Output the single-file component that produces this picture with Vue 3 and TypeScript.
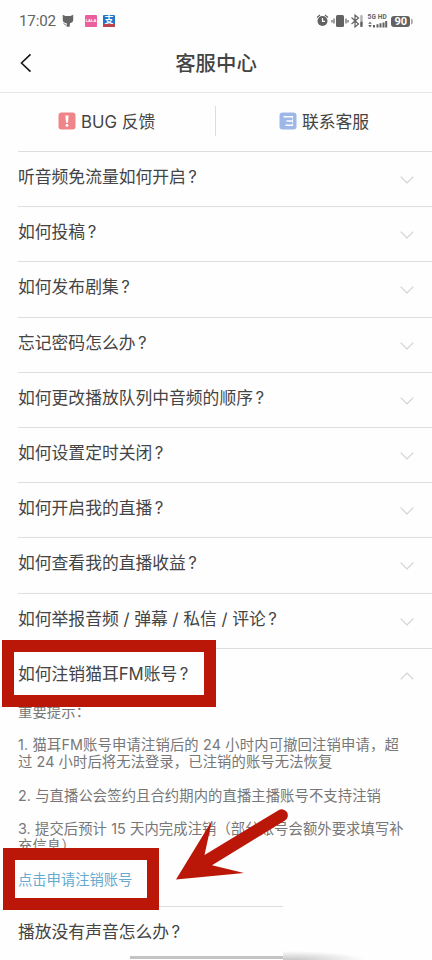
<script setup lang="ts">
interface Question {
  text: string
  open?: boolean
}

const questions: Question[] = [
  { text: '听音频免流量如何开启' },
  { text: '如何投稿' },
  { text: '如何发布剧集' },
  { text: '忘记密码怎么办' },
  { text: '如何更改播放队列中音频的顺序' },
  { text: '如何设置定时关闭' },
  { text: '如何开启我的直播' },
  { text: '如何查看我的直播收益' },
  { text: '如何举报音频 / 弹幕 / 私信 / 评论' },
  { text: '如何注销猫耳FM账号', open: true },
  { text: '播放没有声音怎么办' },
]
</script>

<template>
  <div class="screen">
    <header class="status">
      <span class="time">17:02</span>
      <svg class="cat" width="12" height="14" viewBox="0 0 12 14">
        <path d="M.7.8 3.400 2h5L11.200.8V6.500Q11 8.800 8 9.300L7.600 12.800H4.700V9.300Q1 8.800.8 6.500Z" fill="#666" />
        <path d="M1.500 9.500 4.500 11.500" fill="none" stroke="#888" />
      </svg>
      <span class="app pink">LALA</span>
      <span class="app pay"><b>支</b><i></i></span>
      <span class="spacer"></span>
      <svg class="system" width="97" height="18" viewBox="0 0 97 18">
        <g fill="#626262" stroke="none">
          <circle cx="6.500" cy="9" r="5" />
          <rect x="20" y="3" width="8" height="12" rx="1.500" />
          <rect x="44.200" y="3" width="2.500" height="7" rx="1" fill="#b4b4b4" />
          <rect x="44.200" y="9.500" width="2.500" height="5.500" rx="1" />
          <path d="m52.200 11.800 1.800-2 1.800 2zM52.200 13h3.600L54 15.500zM57 13h2v2.500h-2zM60.500 12.200h2v3.300h-2zM63.500 11.200h2v4.300h-2zM66.500 10.500h2v5h-2zM69.200 9h2v6.500h-2z" />
          <rect x="75" y="4" width="19" height="11" rx="3" />
          <path d="M95 6.500q2 .5 2 3t-2 3z" fill="#aaa" />
        </g>
        <g fill="none" stroke="#626262" stroke-width="1.200">
          <path d="m1 5.500 3-2.500M9 3 12 5.500M18 6.500v5M30 6.500v5M16 8v2.500M32 8v2.500M35.500 5.500l7 6.500-3.500 3V3l3.500 3-7 6" />
          <path d="M6.500 6v3.300H9" stroke="#fff" />
        </g>
        <text x="51.500" y="6.900" class="network">5G HD</text>
        <text x="78.500" y="13.400" class="battery">90</text>
      </svg>
    </header>

    <nav class="title-bar">
      <svg class="back" width="12" height="20" viewBox="0 0 12 20">
        <path d="M10.500 1.300 1.500 10l9 8.700" fill="none" stroke="#171717" stroke-width="1.600" />
      </svg>
      <h1>客服中心</h1>
    </nav>

    <section class="actions">
      <div class="action bug">
        <svg width="18" height="18" viewBox="0 0 18 18">
          <rect x=".5" y=".5" width="17" height="17" rx="3" fill="#ef8588" />
          <path d="M7.400 3.500h3.200L10 10.800H8z" fill="#fff" />
          <circle cx="9" cy="13.400" r="1.400" fill="#fff" />
        </svg>
        <span>BUG 反馈</span>
      </div>
      <div class="action contact">
        <svg width="18" height="18" viewBox="0 0 18 18">
          <rect x=".5" y=".5" width="17" height="17" rx="3" fill="#9db8e8" />
          <path d="M4.500 4.800H14M7.500 9H14M6.500 13.200H14" fill="none" stroke="#fff" stroke-width="1.500" />
          <path d="M13.600 4v10" fill="none" stroke="#fff" stroke-opacity=".6" />
        </svg>
        <span>联系客服</span>
      </div>
    </section>

    <main class="faq">
      <article v-for="question in questions" :key="question.text" class="item">
        <div class="question">
          <span class="label">{{ question.text }}<span class="mark">?</span></span>
          <svg class="chevron" :class="{ up: question.open }" width="14" height="8" viewBox="0 0 14 8">
            <path d="m.7.7 6.300 6.300L13.300.7" fill="none" stroke="#d2d2d2" stroke-width="1.200" />
          </svg>
          <span v-if="question.open" class="frame frame-question"></span>
        </div>
        <div v-if="question.open" class="answer">
          <p>重要提示：</p>
          <p><span class="wide">1. 猫耳FM账号申请注销后的 24 小时内可撤回注销申请，超</span><br />过 24 小时后将无法登录，已注销的账号无法恢复</p>
          <p>2. 与直播公会签约且合约期内的直播主播账号不支持注销</p>
          <p>3. 提交后预计 15 天内完成注销（部分账号会额外要求填写补<br />充信息）</p>
          <p class="link">点击申请注销账号</p>
          <span class="frame frame-link"></span>
          <svg class="arrow" width="116" height="76" viewBox="0 0 116 76">
            <path d="M2 74.500 38 15.500 30.500 50 104.500 5.200A6 6 0 0 1 111 15.500L38 60.300 70 68Z" fill="#bb1709" />
          </svg>
        </div>
      </article>
    </main>
    <div class="home-bar"></div>
    <div class="haze"></div>
  </div>
</template>

<style>
body {
  margin: 0;
  background: #fefefe;
}
</style>

<style scoped>
.screen {
  position: relative;
  width: 432px;
  height: 960px;
  overflow: hidden;
  background: #fefefe;
  color: #444;
  font-family: Inter, "Noto Sans CJK SC", sans-serif;
}
.status {
  display: flex;
  align-items: center;
  box-sizing: border-box;
  height: 34px;
  padding: 7px 19px 0 19px;
}
.time {
  width: 37px;
  font: 15.2px/20px Roboto, sans-serif;
  letter-spacing: -0.2px;
  color: #626262;
}
.cat {
  margin: 0 11px 0 6px;
}
.app {
  width: 12px;
  height: 12px;
  border-radius: 1px;
  color: #fff;
  text-align: center;
}
.pink {
  margin-right: 6px;
  background: #ec5f9f;
  font: bold 4px/12px "Liberation Sans", sans-serif;
}
.pay {
  display: flex;
  flex-direction: column;
  background: #2673c9;
}
.pay b {
  height: 9px;
  font-size: 9px;
  line-height: 9px;
}
.pay i {
  height: 3px;
  background: #bd444c;
}
.spacer {
  flex: 1;
}
.system {
  flex: none;
}
.network {
  font: bold 6.5px Roboto, sans-serif;
  letter-spacing: 0.15px;
  fill: #626262;
}
.battery {
  font: bold 11px Roboto, sans-serif;
  fill: #fff;
}
.title-bar {
  display: flex;
  align-items: center;
  box-sizing: border-box;
  height: 59px;
  padding: 0 20px 1px;
  border-bottom: 1px solid #e5e5e5;
}
.back {
  flex: none;
}
h1 {
  flex: 1;
  margin: 2px 12px 0 0;
  font-size: 20.4px;
  font-weight: 500;
  line-height: 30px;
  text-align: center;
}
.actions {
  display: flex;
  align-items: center;
  box-sizing: border-box;
  height: 58px;
  padding-bottom: 2px;
}
.action {
  display: flex;
  align-items: center;
  box-sizing: border-box;
  height: 30px;
  gap: 5px;
  font-size: 16.8px;
  line-height: 24px;
}
.action span {
  padding-top: 2px;
}
.bug {
  width: 216px;
  padding-left: 58px;
  border-right: 1px solid #ddd;
}
.contact {
  padding-left: 63px;
}
.item {
  margin-left: 18px;
  border-top: 1px solid #dedede;
}
.question {
  position: relative;
  display: flex;
  justify-content: space-between;
  box-sizing: border-box;
  height: 54.2px;
  padding: 13px 18px 0 0;
}
.label {
  font-size: 16.8px;
  line-height: 25px;
  white-space: pre;
}
.mark {
  margin-left: 2.5px;
}
.chevron {
  margin-top: 11px;
}
.up {
  margin-top: 10px;
  transform: rotate(180deg);
}
.answer {
  position: relative;
  box-sizing: border-box;
  height: 203.6px;
  padding-top: 1px;
  font-size: 14.3px;
  line-height: 16.8px;
  letter-spacing: 0.11px;
  color: #777;
  white-space: nowrap;
}
.answer p {
  margin: 0 0 16.8px;
}
.wide {
  letter-spacing: 0.17px;
}
.answer .link {
  letter-spacing: 0;
  color: #65abd0;
}
.frame {
  position: absolute;
  box-sizing: border-box;
  border: 12px solid #bb1709;
}
.frame-question {
  z-index: 1;
  left: -16px;
  top: -9px;
  width: 214px;
  height: 67px;
}
.frame-link {
  left: -15px;
  top: 145px;
  width: 156px;
  height: 62px;
}
.arrow {
  position: absolute;
  left: 156px;
  top: 102px;
}
.home-bar {
  position: absolute;
  left: 130px;
  top: 956px;
  width: 153px;
  height: 3px;
  background: #c3c3c3;
}
.haze {
  position: absolute;
  left: 283px;
  top: 900px;
  width: 149px;
  height: 60px;
  background: radial-gradient(ellipse 75px 9px at 8px 60px, #c6c6c6, #fefefe);
}
</style>
